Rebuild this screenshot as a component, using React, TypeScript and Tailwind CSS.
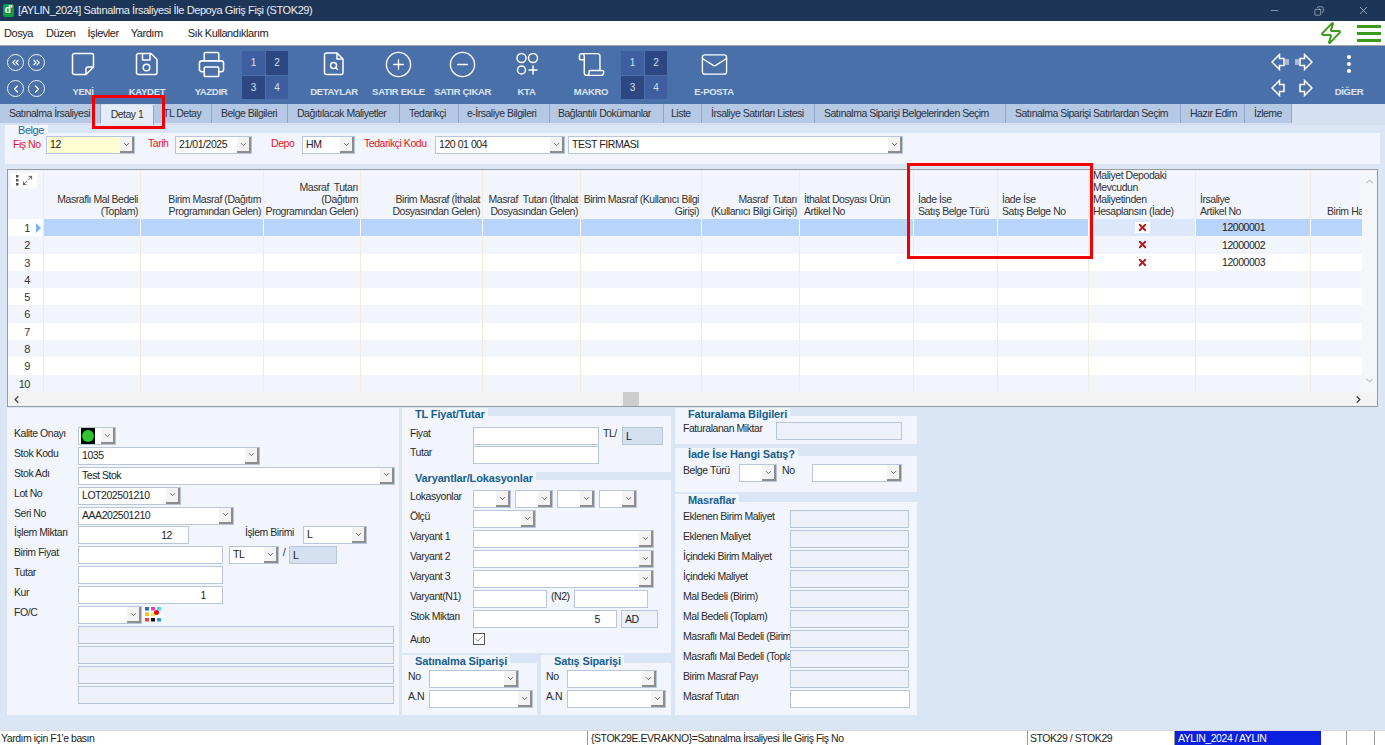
import React from "react";
import { Printer, CirclePlus, CircleMinus, Mail, ChevronDown, ChevronLeft, ChevronRight, ChevronUp, ChevronsLeft, ChevronsRight, Scroll, Zap, Minus, X, Copy, Check, Maximize2 } from "lucide-react";

const Box = ({ w, tone = "white", right, children }: { w: string; tone?: "white" | "gray" | "blue"; right?: boolean; children?: React.ReactNode }) => (
  <div className={`${w} h-[18px] shrink-0 border border-[#b7c6da] px-[3px] leading-[16px] text-[10.5px] text-[#222] whitespace-nowrap overflow-hidden ${right ? "text-right pr-[16px]" : ""} ${tone === "white" ? "bg-white" : tone === "gray" ? "bg-[#eef2f8] border-[#a9b4c2]" : "bg-[#d5e0f1] text-[#7f8fa8]"}`}>
    {children}
  </div>
);

const Combo = ({ w, value, yellow }: { w: string; value?: string; yellow?: boolean }) => (
  <div className={`${w} h-[18px] shrink-0 flex border border-[#b7c6da] ${yellow ? "bg-[#fdfdd2]" : "bg-white"}`}>
    <span className="flex-1 min-w-0 px-[3px] leading-[15px] text-[10.5px] text-[#222] whitespace-nowrap overflow-hidden">{value}</span>
    <span className="w-[14px] shrink-0 bg-[#f3f3f3] border-r-2 border-b-2 border-[#8d8d8d] flex items-center justify-center">
      <ChevronDown size={9} strokeWidth={2} className="text-[#444]" />
    </span>
  </div>
);

const L = ({ w, children, red, top = "-mt-[1px]" }: { w: string; children?: React.ReactNode; red?: boolean; top?: string }) => (
  <span className={`${w} ${top} shrink-0 leading-[14px] text-[10.5px] whitespace-nowrap overflow-hidden ${red ? "text-[#e8141c]" : "text-[#2a2a2a]"}`}>{children}</span>
);

const Group = ({ title, className, bodyClass, children }: { title: string; className: string; bodyClass: string; children: React.ReactNode }) => (
  <section className={`flex flex-col ${className}`}>
    <div className="h-[8px] shrink-0 flex">
      <h3 className="h-[8px] pl-[13px] pr-[3px] bg-[#f2f6fc] leading-[13px] text-[11px] font-bold tracking-[-0.15px] text-[#15608f] whitespace-nowrap relative">{title}</h3>
    </div>
    <div className={`flex-1 bg-[#f2f6fc] flex flex-col ${bodyClass}`}>{children}</div>
  </section>
);

const NewIcon = () => (
  <svg width="24" height="24" viewBox="0 0 24 24" fill="none" stroke="white" strokeWidth="1.5" strokeLinejoin="round">
    <path d="M3.5 1.5h17a2 2 0 0 1 2 2v11.5l-7.5 7.500H3.500a2 2 0 0 1-2-2v-17a2 2 0 0 1 2-2z" />
    <path d="M15 22.500v-5.500a2 2 0 0 1 2-2h5.500" />
  </svg>
);
const SaveIcon = () => (
  <svg width="24" height="24" viewBox="0 0 24 24" fill="none" stroke="white" strokeWidth="1.5" strokeLinejoin="round">
    <path d="M3.500 1.500h12.500l6 6v13a2 2 0 0 1-2 2h-16.500a2 2 0 0 1-2-2v-17a2 2 0 0 1 2-2z" />
    <path d="M7.500 1.500v6.500h7.500V1.500" />
    <circle cx="11.500" cy="15.500" r="3.300" />
  </svg>
);
const DetailIcon = () => (
  <svg width="24" height="24" viewBox="0 0 24 24" fill="none" stroke="white" strokeWidth="1.5" strokeLinejoin="round">
    <path d="M4.500 1h10.500l6 6v13.500a2 2 0 0 1-2 2h-14.500a2 2 0 0 1-2-2v-17.500a2 2 0 0 1 2-2z" />
    <path d="M15 1v6h6" />
    <circle cx="11.500" cy="13.500" r="3" />
    <path d="M13.800 15.800l2 2" />
  </svg>
);
const KtaIcon = () => (
  <svg width="24" height="24" viewBox="0 0 24 24" fill="none" stroke="white" strokeWidth="1.5">
    <circle cx="6.500" cy="6" r="4.500" />
    <circle cx="18" cy="6" r="4.500" />
    <circle cx="6.500" cy="18" r="4" />
    <path d="M18 13.500v9M13.500 18h9" />
  </svg>
);

const ToolItem = ({ w, label, icon, className = "" }: { w: string; label: string; icon: React.ReactNode; className?: string }) => (
  <div className={`${w} shrink-0 flex flex-col items-center ${className}`}>
    <div className="h-[26px] flex items-center justify-center">{icon}</div>
    <span className="mt-[9px] text-[9.5px] leading-[12px] font-bold tracking-[-0.3px] text-[#dbe5f4] whitespace-nowrap">{label}</span>
  </div>
);

const NumGrid = ({ className }: { className: string }) => (
  <div className={`w-[46px] shrink-0 grid grid-cols-2 grid-rows-2 gap-[1px] text-[10px] text-[#d5e0f2] ${className}`}>
    <span className="bg-[#3f5e9f] flex items-center justify-center">1</span>
    <span className="bg-[#2d4782] flex items-center justify-center">2</span>
    <span className="bg-[#2d4782] flex items-center justify-center">3</span>
    <span className="bg-[#3f5e9f] flex items-center justify-center">4</span>
  </div>
);

const Round = ({ children }: { children: React.ReactNode }) => (
  <span className="w-[17px] h-[17px] rounded-full border-[1.5px] border-[#eef3fa] flex items-center justify-center text-white">{children}</span>
);

const ArrowL = ({ bars }: { bars?: boolean }) => (
  <svg width="20" height="18" viewBox="0 0 20 18" fill="none" stroke="white" strokeWidth="1.5">
    <path d="M1 9 8.500 1.500V5.500h4.500v7H8.500v4z" />
    {bars && <path d="M15 6v6M17 6v6" strokeWidth="1" />}
  </svg>
);
const ArrowR = ({ bars }: { bars?: boolean }) => (
  <svg width="20" height="18" viewBox="0 0 20 18" fill="none" stroke="white" strokeWidth="1.5">
    <path d="M19 9 11.500 1.500V5.500H7v7h4.500v4z" />
    {bars && <path d="M5 6v6M3 6v6" strokeWidth="1" />}
  </svg>
);

const tabs: [string, string][] = [
  ["Satınalma İrsaliyesi", "w-[101px] pl-[9px]"],
  ["Detay 1", "w-[53px] justify-center"],
  ["TL Detay", "w-[58px] pl-[9px]"],
  ["Belge Bilgileri", "w-[76px] pl-[9px]"],
  ["Dağıtılacak Maliyetler", "w-[112px] pl-[9px]"],
  ["Tedarikçi", "w-[59px] pl-[9px]"],
  ["e-İrsaliye Bilgileri", "w-[91px] pl-[8px]"],
  ["Bağlantılı Dokümanlar", "w-[114px] pl-[8px]"],
  ["Liste", "w-[38px] pl-[7px]"],
  ["İrsaliye Satırları Listesi", "w-[113px] pl-[9px]"],
  ["Satınalma Siparişi Belgelerinden Seçim", "w-[191px] pl-[9px]"],
  ["Satınalma Siparişi Satırlardan Seçim", "w-[175px] pl-[9px]"],
  ["Hazır Edim", "w-[64px] pl-[9px]"],
  ["İzleme", "w-[47px] pl-[9px]"],
];

type Col = { w: string; lines: string[]; left?: boolean; pad?: string };
const cols: Col[] = [
  { w: "w-[97px]", lines: ["Masraflı Mal Bedeli", "(Toplam)"] },
  { w: "w-[123px]", lines: ["Birim Masraf (Dağıtım", "Programından Gelen)"] },
  { w: "w-[97px]", lines: ["Masraf  Tutarı", "(Dağıtım", "Programından Gelen)"] },
  { w: "w-[122px]", lines: ["Birim Masraf (İthalat", "Dosyasından Gelen)"] },
  { w: "w-[98px]", lines: ["Masraf  Tutarı (İthalat", "Dosyasından Gelen)"] },
  { w: "w-[121px]", lines: ["Birim Masraf (Kullanıcı Bilgi", "Girişi)"] },
  { w: "w-[98px]", lines: ["Masraf  Tutarı", "(Kullanıcı Bilgi Girişi)"] },
  { w: "w-[114px]", lines: ["İthalat Dosyası Ürün", "Artikel No"], left: true },
  { w: "w-[84px]", lines: ["İade İse", "Satış Belge Türü"], left: true },
  { w: "w-[91px]", lines: ["İade İse", "Satış Belge No"], left: true },
  { w: "w-[107px]", lines: ["Maliyet Depodaki", "Mevcudun", "Maliyetinden", "Hesaplansın (İade)"], left: true },
  { w: "w-[115px]", lines: ["İrsaliye", "Artikel No"], left: true },
  { w: "w-[52px]", lines: ["Birim Ha"], left: true, pad: "pl-[16px]" },
];

const rowNums = [1, 2, 3, 4, 5, 6, 7, 8, 9, 10];
const artikel: Record<number, string> = { 1: "12000001", 2: "12000002", 3: "12000003" };

const DataGrid = () => (
  <div className="mx-[7px] h-[238px] shrink-0 border border-[#9a9a9a] bg-white flex flex-col">
    <div className="flex-1 min-h-0 flex">
      <div className="flex-1 min-w-0 overflow-hidden flex flex-col">
        <div className="h-[49px] shrink-0 flex bg-[#f2f6fc]">
          <div className="w-[36px] shrink-0 border-r border-[#f1ecdc] flex items-start">
            <span className="mt-[3px] ml-[3px] w-[26px] h-[15px] bg-white flex items-center justify-center gap-[3px] text-[#555]">
              <svg width="3" height="11" viewBox="0 0 3 11" fill="#555"><rect width="2.5" height="2.5" /><rect y="4" width="2.5" height="2.5" /><rect y="8" width="2.5" height="2.5" /></svg>
              <Maximize2 size={11} strokeWidth={2} />
            </span>
          </div>
          {cols.map((c, i) => (
            <div key={i} className={`${c.w} shrink-0 border-r border-[#f1ecdc] flex flex-col justify-end pb-[2px] text-[10.5px] leading-[12px] text-[#333] whitespace-pre overflow-visible ${c.left ? "text-left pl-[4px]" : "text-right pr-[2px]"} ${c.pad ?? ""}`}>
              {c.lines.map((t) => <div key={t}>{t}</div>)}
            </div>
          ))}
        </div>
        {rowNums.map((n) => {
          const sel = n === 1;
          const striped = n % 2 === 0;
          return (
            <div key={n} className={`h-[17.3px] shrink-0 flex ${striped ? "bg-[#f2f6fc]" : "bg-white"}`}>
              <div className="w-[36px] shrink-0 flex items-center border-r border-[#f1ecdc] pt-[1px] text-[11px] text-[#333]">
                <span className="w-[22px] text-right">{n}</span>
                {sel && <span className="ml-[6px] w-0 h-0 border-y-[5px] border-y-transparent border-l-[5px] border-l-[#7fb0ee]" />}
              </div>
              {cols.map((c, i) => (
                <div key={i} className={`${c.w} shrink-0 border-r ${sel ? (i === 10 ? "bg-[#dbe8fc] border-white" : "bg-[#b9d4fb] border-white") : "border-[#f1ecdc]"} flex items-center text-[10.5px] text-[#222] ${i === 10 ? "justify-center" : ""} ${i === 11 ? "pl-[26px] pt-[1px]" : ""}`}>
                  {i === 10 && artikel[n] && <span className={`px-[2px] ${sel ? "bg-white" : ""}`}><X size={11} strokeWidth={4} className="text-[#b8161c]" /></span>}
                  {i === 11 && artikel[n]}
                </div>
              ))}
            </div>
          );
        })}
      </div>
      <div className="w-[15px] shrink-0 bg-[#f4f6fa] flex flex-col items-center justify-between py-[6px] text-[#c3c3c3]">
        <ChevronUp size={11} strokeWidth={2.5} />
        <ChevronDown size={11} strokeWidth={2.5} />
      </div>
    </div>
    <div className="h-[14px] shrink-0 bg-[#f3f3f3] flex items-center text-[#444]">
      <ChevronLeft size={11} strokeWidth={3} className="ml-[3px]" />
      <span className="ml-[601px] w-[16px] h-[14px] bg-[#cdcdcd]" />
      <ChevronRight size={11} strokeWidth={3} className="ml-[714px]" />
    </div>
  </div>
);

const LeftRow = ({ label, children }: { label?: string; children: React.ReactNode }) => (
  <div className="flex items-start h-[18px]">
    <L w="w-[64px]">{label}</L>
    {children}
  </div>
);

const LeftPanel = () => (
  <div className="w-[392px] shrink-0 bg-[#f2f6fc] pt-[19px] pl-[7px] flex flex-col gap-[1.9px]">
    <LeftRow label="Kalite Onayı">
      <div className="w-[38px] h-[18px] flex border border-[#b7c6da] bg-white pl-[2px]">
        <span className="w-[14px] bg-black flex items-center justify-center"><span className="w-[12px] h-[12px] rounded-full bg-[#2fc52f]" /></span>
        <span className="w-[14px] ml-auto bg-[#f3f3f3] border-r-2 border-b-2 border-[#8d8d8d] flex items-center justify-center"><ChevronDown size={9} strokeWidth={2} className="text-[#444]" /></span>
      </div>
    </LeftRow>
    <LeftRow label="Stok Kodu"><Combo w="w-[182px]" value="1035" /></LeftRow>
    <LeftRow label="Stok Adı"><Combo w="w-[317px]" value="Test Stok" /></LeftRow>
    <LeftRow label="Lot No"><Combo w="w-[103px]" value="LOT202501210" /></LeftRow>
    <LeftRow label="Seri No"><Combo w="w-[156px]" value="AAA202501210" /></LeftRow>
    <LeftRow label="İşlem Miktarı">
      <Box w="w-[111px]" right>12</Box>
      <L w="w-[58px] ml-[56px]">İşlem Birimi</L>
      <Combo w="w-[64px]" value="L" />
    </LeftRow>
    <LeftRow label="Birim Fiyat">
      <Box w="w-[145px]" />
      <div className="ml-[6px]"><Combo w="w-[50px]" value="TL" /></div>
      <span className="w-[10px] text-center text-[11px] leading-[12px] text-[#333]">/</span>
      <Box w="w-[48px]" tone="blue">L</Box>
    </LeftRow>
    <LeftRow label="Tutar"><Box w="w-[145px]" /></LeftRow>
    <LeftRow label="Kur"><Box w="w-[145px]" right>1</Box></LeftRow>
    <LeftRow label="FO/C">
      <Combo w="w-[64px]" />
      <svg className="ml-[2px]" width="18" height="16" viewBox="0 0 18 16">
        <rect width="18" height="16" fill="#fff" />
        <rect x="1" y="1" width="4" height="3.5" fill="#1f6fc4" /><rect x="7" y="1" width="4" height="3.5" fill="#e83fb0" /><rect x="13" y="1" width="4" height="3.5" fill="#4fd6e8" />
        <rect x="1" y="6.5" width="4" height="3.5" fill="#f4c21f" /><rect x="7" y="6.5" width="4" height="3.5" fill="#f4e04f" /><circle cx="12.5" cy="6.5" r="2.5" fill="#e01010" />
        <rect x="1" y="12" width="4" height="3.5" fill="#e84040" /><rect x="7" y="12" width="4" height="3.5" fill="#111" /><rect x="13" y="12" width="4" height="3.5" fill="#2a9fd0" />
      </svg>
    </LeftRow>
    {[0, 1, 2, 3].map((i) => (
      <LeftRow key={i}><Box w="w-[316px]" tone="gray" /></LeftRow>
    ))}
  </div>
);

const MRow = ({ label, children }: { label: string; children: React.ReactNode }) => (
  <div className="flex items-start h-[18px]">
    <L w="w-[63px]">{label}</L>
    {children}
  </div>
);

const MiddlePanel = () => (
  <div className="w-[269px] shrink-0 ml-[3px] flex flex-col">
    <Group title="TL Fiyat/Tutar" className="h-[64px] shrink-0" bodyClass="pl-[8px] pt-[11px] gap-[1px]">
      <MRow label="Fiyat">
        <Box w="w-[126px]" />
        <L w="w-[19px] ml-[4px]">TL/</L>
        <Box w="w-[41px]" tone="blue">L</Box>
      </MRow>
      <MRow label="Tutar"><Box w="w-[126px]" /></MRow>
    </Group>
    <Group title="Varyantlar/Lokasyonlar" className="h-[181px] shrink-0" bodyClass="pl-[8px] pt-[10px] gap-[2px]">
      <MRow label="Lokasyonlar">
        <div className="flex gap-[4px]">
          <Combo w="w-[38px]" /><Combo w="w-[38px]" /><Combo w="w-[38px]" /><Combo w="w-[38px]" />
        </div>
      </MRow>
      <MRow label="Ölçü"><Combo w="w-[63px]" /></MRow>
      <MRow label="Varyant 1"><Combo w="w-[181px]" /></MRow>
      <MRow label="Varyant 2"><Combo w="w-[181px]" /></MRow>
      <MRow label="Varyant 3"><Combo w="w-[181px]" /></MRow>
      <MRow label="Varyant(N1)">
        <Box w="w-[74px]" />
        <L w="w-[23px] ml-[4px]">(N2)</L>
        <Box w="w-[74px]" />
      </MRow>
      <MRow label="Stok Miktarı">
        <Box w="w-[144px]" right>5</Box>
        <div className="ml-[4px]"><Box w="w-[37px]" tone="gray">AD</Box></div>
      </MRow>
      <div className="flex items-center h-[14px] mt-[2px]">
        <L w="w-[63px]" top="mt-0">Auto</L>
        <span className="w-[12px] h-[12px] border border-[#555] bg-white flex items-center justify-center"><Check size={10} strokeWidth={1.5} className="text-[#333]" /></span>
      </div>
    </Group>
    <div className="flex flex-1 mt-[2px] gap-[4px]">
      <Group title="Satınalma Siparişi" className="w-[135px]" bodyClass="pl-[6px] pt-[7px] gap-[2px]">
        <div className="flex items-start"><L w="w-[21px]">No</L><Combo w="w-[90px]" /></div>
        <div className="flex items-start"><L w="w-[21px]">A.N</L><Combo w="w-[104px]" /></div>
      </Group>
      <Group title="Satış Siparişi" className="w-[130px]" bodyClass="pl-[5px] pt-[7px] gap-[2px]">
        <div className="flex items-start"><L w="w-[21px]">No</L><Combo w="w-[90px]" /></div>
        <div className="flex items-start"><L w="w-[21px]">A.N</L><Combo w="w-[99px]" /></div>
      </Group>
    </div>
  </div>
);

const masraf = ["Eklenen Birim Maliyet", "Eklenen Maliyet", "İçindeki Birim Maliyet", "İçindeki Maliyet", "Mal Bedeli (Birim)", "Mal Bedeli (Toplam)", "Masraflı Mal Bedeli (Birim)", "Masraflı Mal Bedeli (Toplam)", "Birim Masraf Payı", "Masraf Tutarı"];

const RightPanel = () => (
  <div className="w-[242px] shrink-0 ml-[4px] flex flex-col">
    <Group title="Faturalama Bilgileri" className="h-[36px] shrink-0" bodyClass="pl-[8px] pt-[6px]">
      <div className="flex items-start">
        <L w="w-[93px]">Faturalanan Miktar</L>
        <Box w="w-[126px]" tone="gray" />
      </div>
    </Group>
    <Group title="İade İse Hangi Satış?" className="h-[44px] shrink-0 mt-[4px]" bodyClass="pl-[8px] pt-[8px]">
      <div className="flex items-start">
        <L w="w-[56px]">Belge Türü</L>
        <Combo w="w-[38px]" />
        <L w="w-[30px] ml-[5px]">No</L>
        <Combo w="w-[90px]" />
      </div>
    </Group>
    <Group title="Masraflar" className="flex-1 mt-[2px]" bodyClass="pl-[8px] pt-[8px] gap-[2px]">
      {masraf.map((m, i) => (
        <div key={m} className="flex items-start">
          <L w="w-[107px]">{m}</L>
          <Box w={i === 9 ? "w-[120px]" : "w-[119px]"} tone={i === 9 ? "white" : "gray"} />
        </div>
      ))}
    </Group>
  </div>
);

export default function App() {
  return (
    <div className="relative w-[1385px] h-[745px] overflow-hidden flex flex-col bg-[#dae5f5] font-['Liberation_Sans',sans-serif] text-[11px] tracking-[-0.45px]">
      {/* title bar */}
      <header className="h-[21px] shrink-0 bg-[#1d3557] flex items-center text-[#e8edf4]">
        <span className="ml-[3px] w-[11px] h-[13px] bg-[#129a45] rounded-[2px] text-white text-[10px] font-bold leading-[12px] text-center">d'</span>
        <span className="ml-[4px] text-[11px] tracking-[-0.4px]">[AYLIN_2024] Satınalma İrsaliyesi İle Depoya Giriş Fişi (STOK29)</span>
        <div className="ml-auto flex items-center text-[#dfe6ef]">
          <Minus size={11} strokeWidth={1.2} className="mr-[34px]" />
          <Copy size={10} strokeWidth={1.3} className="mr-[33px] -scale-x-100" />
          <X size={13} strokeWidth={1.2} className="mr-[15px]" />
        </div>
      </header>
      {/* menu bar */}
      <nav className="h-[25px] shrink-0 bg-white border-b border-[#a8a8a8] flex items-center text-[11px] text-[#222]">
        <span className="ml-[4px]">Dosya</span>
        <span className="ml-[13px]">Düzen</span>
        <span className="ml-[12px]">İşlevler</span>
        <span className="ml-[12px]">Yardım</span>
        <span className="ml-[25px]">Sık Kullandıklarım</span>
        <Zap size={24} strokeWidth={2} className="ml-auto mr-[14px] text-[#3b9a1a]" />
        <div className="w-[24px] mr-[4px] flex flex-col gap-[4px]">
          <span className="h-[3px] bg-[#3b9a1a]" /><span className="h-[3px] bg-[#3b9a1a]" /><span className="h-[3px] bg-[#3b9a1a]" />
        </div>
      </nav>
      {/* toolbar */}
      <div className="h-[58px] shrink-0 bg-[#4a70a9] flex items-stretch pl-[7px] py-[5px]">
        <div className="w-[40px] shrink-0 flex flex-col gap-[9px] pt-[3px]">
          <div className="flex gap-[4px]">
            <Round><ChevronsLeft size={11} strokeWidth={2.5} /></Round>
            <Round><ChevronsRight size={11} strokeWidth={2.5} /></Round>
          </div>
          <div className="flex gap-[4px]">
            <Round><ChevronLeft size={12} strokeWidth={2.5} /></Round>
            <Round><ChevronRight size={12} strokeWidth={2.5} /></Round>
          </div>
        </div>
        <ToolItem className="ml-[4px]" w="w-[64px]" label="YENİ" icon={<NewIcon />} />
        <ToolItem w="w-[64px]" label="KAYDET" icon={<SaveIcon />} />
        <ToolItem w="w-[64px]" label="YAZDIR" icon={<Printer size={29} strokeWidth={1.3} color="white" />} />
        <NumGrid className="-ml-[1px]" />
        <ToolItem className="ml-[14px]" w="w-[64px]" label="DETAYLAR" icon={<DetailIcon />} />
        <ToolItem w="w-[65px]" label="SATIR EKLE" icon={<CirclePlus size={29} strokeWidth={1.1} color="white" />} />
        <ToolItem w="w-[63px]" label="SATIR ÇIKAR" icon={<CircleMinus size={29} strokeWidth={1.1} color="white" />} />
        <ToolItem w="w-[65px]" label="KTA" icon={<KtaIcon />} />
        <ToolItem w="w-[64px]" label="MAKRO" icon={<Scroll size={29} strokeWidth={1.2} color="white" />} />
        <NumGrid className="-ml-[2px]" />
        <ToolItem className="ml-[15px]" w="w-[64px]" label="E-POSTA" icon={<Mail size={29} strokeWidth={1.1} color="white" />} />
        <div className="ml-auto w-[42px] shrink-0 flex flex-col gap-[8px] pt-[2px]">
          <div className="flex justify-between"><ArrowL bars /><ArrowR bars /></div>
          <div className="flex justify-between"><ArrowL /><ArrowR /></div>
        </div>
        <div className="w-[72px] shrink-0 flex flex-col items-center">
          <div className="h-[26px] flex flex-col items-center justify-center gap-[3px]">
            <span className="w-[4px] h-[4px] rounded-full bg-white" /><span className="w-[4px] h-[4px] rounded-full bg-white" /><span className="w-[4px] h-[4px] rounded-full bg-white" />
          </div>
          <span className="mt-[9px] text-[9.5px] leading-[12px] font-bold tracking-[-0.3px] text-[#dbe5f4]">DİĞER</span>
        </div>
      </div>
      {/* tabs */}
      <div className="h-[21px] shrink-0 flex items-stretch bg-[#d5e1f3]">
        {tabs.map(([t, w]) => {
          const active = t === "Detay 1";
          return (
            <div key={t} className={`${w} shrink-0 flex items-center whitespace-nowrap text-[10.5px] tracking-[-0.5px] border-r border-[#8fa6c8] ${active ? "bg-[#e4ecf8] mt-[1px] text-[#333]" : "bg-[#b5c9e5] mb-[2px] text-[#2a2f3a]"}`}>{t}</div>
          );
        })}
      </div>
      {/* belge */}
      <div className="ml-[5px] mr-[5px] h-[39px] shrink-0 flex flex-col">
        <div className="h-[8px] shrink-0 flex"><h3 className="h-[8px] pl-[13px] pr-[4px] bg-[#f2f6fc] leading-[11px] text-[11px] font-normal text-[#23679a] relative">Belge</h3></div>
        <div className="flex-1 bg-[#f2f6fc] flex items-start pl-[8px] pt-[3px]">
          <L w="w-[33px]" red top="mt-[1px]">Fiş No</L>
          <Combo w="w-[89px]" value="12" yellow />
          <L w="w-[27px] ml-[13px]" red top="mt-0">Tarih</L>
          <Combo w="w-[77px]" value="21/01/2025" />
          <L w="w-[31px] ml-[19px]" red top="mt-0">Depo</L>
          <Combo w="w-[53px]" value="HM" />
          <L w="w-[71px] ml-[9px]" red top="mt-0">Tedarikçi Kodu</L>
          <Combo w="w-[130px]" value="120 01 004" />
          <div className="ml-[3px]"><Combo w="w-[335px]" value="TEST FIRMASI" /></div>
        </div>
      </div>
      <div className="h-[5px] shrink-0" />
      <DataGrid />
      {/* bottom */}
      <div className="ml-[7px] mt-[1px] h-[307px] shrink-0 flex">
        <LeftPanel />
        <MiddlePanel />
        <RightPanel />
      </div>
      {/* status bar */}
      <footer className="mt-auto h-[15px] shrink-0 bg-white flex text-[10.5px] leading-[14px] text-[#222] border-t border-[#d8d8d8]">
        <span className="w-[587px] pl-[1px]">Yardım için F1'e basın</span>
        <span className="w-[441px] border-x border-[#999] pl-[3px]">{"{STOK29E.EVRAKNO}=Satınalma İrsaliyesi İle Giriş Fiş No"}</span>
        <span className="w-[147px] border-r border-[#999] pl-[2px]">STOK29 / STOK29</span>
        <span className="w-[146px] bg-[#0b1fe0] text-white pl-[3px]">AYLIN_2024 / AYLIN</span>
        <span className="w-[26px] border-r border-[#999]" />
        <span className="w-[28px] border-r border-[#999]" />
      </footer>
      {/* red annotation boxes */}
      <div className="absolute left-[92px] top-[95px] w-[73px] h-[34px] border-[3px] border-[#f00000]" />
      <div className="absolute left-[907px] top-[163px] w-[186px] h-[96px] border-[3px] border-[#f00000]" />
    </div>
  );
}
